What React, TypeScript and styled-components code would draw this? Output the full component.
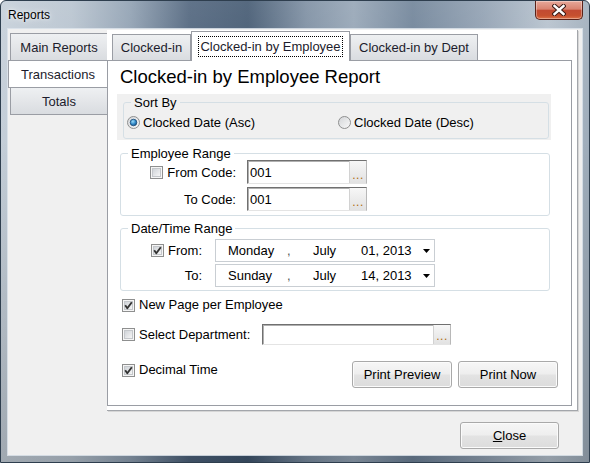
import React from 'react';
import styled, { createGlobalStyle } from 'styled-components';

const GlobalStyle = createGlobalStyle`
  html, body {
    margin: 0;
    padding: 0;
    background: #ffffff;
  }

  body {
    color: #000;
    font-family: "Liberation Sans", Arial, sans-serif;
    font-size: 13px;
  }
`;

const Window = styled.div`
  background:
    linear-gradient(180deg, rgba(255, 255, 255, 0.12) 0%, rgba(255, 255, 255, 0) 30%, rgba(0, 0, 0, 0.18) 100%),
    linear-gradient(90deg, #c4ced8 0%, #b6c2ce 12%, #8d9eb0 22%, #4c617a 32%, #3f556e 42%, #7a8ca0 52%, #93a3b4 60%, #6c8096 70%, #8e9eb0 82%, #b4c0cc 93%, #9eacba 100%);
  border: 1px solid #2e3e4e;
  border-radius: 6px 6px 0 0;
  box-sizing: border-box;
  display: flex;
  flex-direction: column;
  height: 463px;
  overflow: hidden;
  width: 590px;
`;

const TitleBar = styled.div`
  align-items: flex-start;
  display: flex;
  flex: none;
  height: 28px;
  padding-left: 7px;
`;

const Caption = styled.span`
  font-size: 12px;
  line-height: 14px;
  margin-top: 7px;
  text-shadow: 0 0 7px rgba(255, 255, 255, 0.9), 0 0 3px rgba(255, 255, 255, 0.7);
`;

const CloseBox = styled.div`
  align-items: center;
  background: linear-gradient(180deg, #e7a89a 0%, #d98370 45%, #c24a32 52%, #c6502f 82%, #de7449 100%);
  border: 1px solid #5a2219;
  border-radius: 0 0 5px 5px;
  border-top: none;
  box-shadow: inset 0 0 0 1px rgba(255, 255, 255, 0.35);
  box-sizing: border-box;
  display: flex;
  height: 19px;
  justify-content: center;
  margin-left: auto;
  margin-right: 6px;
  width: 48px;
`;

const Client = styled.div`
  background: #f0f0f0;
  box-shadow: 0 0 0 1px rgba(222, 229, 236, 0.85);
  display: flex;
  flex: 1;
  flex-direction: column;
  margin: 0 7px 7px;
`;

const MainArea = styled.div`
  display: flex;
  height: 381px;
  margin-top: 1px;
`;

const SideTabs = styled.div`
  box-sizing: border-box;
  display: flex;
  flex: none;
  flex-direction: column;
  padding-top: 3px;
  width: 99px;
`;

const SideTab = styled.div<{ $active?: boolean }>`
  align-items: center;
  background: ${(p) => (p.$active ? '#ffffff' : 'linear-gradient(180deg, #eef0f2 0%, #e4e6e9 50%, #d9dce0 100%)')};
  border: 1px solid #9a9da4;
  border-right: none;
  box-sizing: border-box;
  color: #1c1c2c;
  display: flex;
  height: 28px;
  justify-content: center;
  margin-left: ${(p) => (p.$active ? 0 : 2)}px;
  margin-top: -1px;
  position: relative;
  z-index: ${(p) => (p.$active ? 1 : 0)};

  &:first-child {
    margin-top: 0;
  }
`;

const OuterPage = styled.div`
  background: #ffffff;
  border-bottom: 1px solid #a3a6ab;
  border-right: 1px solid #a3a6ab;
  box-shadow: 1px 1px 0 #d6d6d6;
  display: flex;
  flex: 1;
  flex-direction: column;
  margin-right: 4px;
  min-width: 0;
  padding: 1px 5px 4px 0;
`;

const TabStrip = styled.div`
  align-items: flex-end;
  display: flex;
  flex: none;
  height: 29px;
  padding-left: 5px;
`;

const InnerTab = styled.div<{ $w: number; $active?: boolean }>`
  align-items: center;
  background: ${(p) => (p.$active ? '#ffffff' : 'linear-gradient(180deg, #eef0f2 0%, #e4e6e9 50%, #d9dce0 100%)')};
  border: 1px solid #9a9da4;
  border-bottom: none;
  box-sizing: border-box;
  color: #1c1c2c;
  display: flex;
  height: ${(p) => (p.$active ? 30 : 26)}px;
  justify-content: center;
  margin-bottom: ${(p) => (p.$active ? -1 : 0)}px;
  position: relative;
  width: ${(p) => p.$w}px;
  z-index: ${(p) => (p.$active ? 1 : 0)};
`;

const FocusText = styled.span`
  border: 1px dotted #000;
  line-height: 15px;
  padding: 2px 1px;
`;

const InnerPage = styled.div`
  background: #ffffff;
  border: 1px solid #9a9da4;
  display: flex;
  flex: 1;
  flex-direction: column;
  padding: 0 20px 0 9px;
`;

const Heading = styled.div`
  font-size: 18.5px;
  line-height: 22px;
  margin: 5px 0 0 3px;
`;

const SortBand = styled.div`
  background: #f0f0f0;
  margin-top: 6px;
  padding: 1px 1px 1px 3px;
`;

const Group = styled.fieldset<{ $mt?: number; $pt?: number; $pb?: number }>`
  border: 1px solid #d5dfe5;
  border-radius: 3px;
  margin: ${(p) => p.$mt ?? 0}px 1px 0 3px;
  min-width: 0;
  padding: ${(p) => p.$pt ?? 0}px 0 ${(p) => p.$pb ?? 0}px 0;
`;

const Legend = styled.legend`
  font-size: 13px;
  line-height: 15px;
  margin-left: 7px;
  padding: 0 3px;
`;

const RadioRow = styled.div`
  align-items: center;
  display: flex;
  height: 24px;
  padding-left: 3px;
`;

const RadioItem = styled.label<{ $w?: number }>`
  align-items: center;
  display: flex;
  gap: 3px;
  width: ${(p) => (p.$w ? `${p.$w}px` : 'auto')};
`;

const FieldRows = styled.div<{ $gap: number; $mt?: number }>`
  display: flex;
  flex-direction: column;
  gap: ${(p) => p.$gap}px;
  margin-top: ${(p) => p.$mt ?? 0}px;
`;

const FieldRow = styled.div<{ $h: number }>`
  align-items: center;
  display: flex;
  height: ${(p) => p.$h}px;
`;

const LabelCell = styled.div<{ $w: number; $gap: number }>`
  align-items: center;
  display: flex;
  flex: none;
  gap: 4px;
  justify-content: flex-end;
  margin-right: ${(p) => p.$gap}px;
  width: ${(p) => p.$w}px;
`;

const TextBox = styled.div<{ $w: number; $h: number }>`
  background: #ffffff;
  border: 1px solid;
  border-color: #707070 #b8b8b8 #e4e4e4 #707070;
  box-shadow: inset 1px 1px 0 #b0b0b0;
  box-sizing: border-box;
  display: flex;
  flex: none;
  height: ${(p) => p.$h}px;
  width: ${(p) => p.$w}px;
`;

const BoxValue = styled.span`
  align-items: center;
  display: flex;
  flex: 1;
  padding-left: 2px;
`;

const DotsButton = styled.span`
  align-items: flex-end;
  background: linear-gradient(180deg, #f7f7f7 0%, #ececec 50%, #e2e2e2 100%);
  border-left: 1px solid #d2d2d2;
  box-sizing: border-box;
  color: #b06a0c;
  display: flex;
  font-size: 12px;
  justify-content: center;
  letter-spacing: 0.5px;
  line-height: 12px;
  padding-bottom: 2px;
  width: 17px;
`;

const DatePicker = styled.div`
  align-items: center;
  background: #ffffff;
  border: 1px solid #c9ced3;
  box-sizing: border-box;
  display: flex;
  flex: none;
  height: 23px;
  padding: 0 4px 0 12px;
  width: 220px;
`;

const DatePart = styled.span<{ $w?: number; $muted?: boolean }>`
  color: ${(p) => (p.$muted ? '#555555' : '#000000')};
  flex: ${(p) => (p.$w ? 'none' : '1')};
  width: ${(p) => (p.$w ? `${p.$w}px` : 'auto')};
`;

const CheckRow = styled.div<{ $mt: number; $h: number; $align?: string }>`
  align-items: ${(p) => p.$align ?? 'center'};
  display: flex;
  height: ${(p) => p.$h}px;
  margin-top: ${(p) => p.$mt}px;
  padding-left: 5px;
`;

const CheckItem = styled.label<{ $w?: number }>`
  align-items: center;
  display: flex;
  flex: none;
  gap: 4px;
  line-height: 18px;
  width: ${(p) => (p.$w ? `${p.$w}px` : 'auto')};
`;

const ButtonGroup = styled.div`
  display: flex;
  gap: 6px;
  margin-left: auto;
  margin-right: -7px;
`;

const PushButton = styled.button<{ $w: number }>`
  background: linear-gradient(180deg, #f6f6f6 0%, #eeeeee 48%, #e3e3e3 52%, #dcdcdc 100%);
  border: 1px solid #a9a9a9;
  border-radius: 3px;
  box-shadow: inset 0 0 0 1px #fbfbfb;
  color: #000;
  font-family: "Liberation Sans", Arial, sans-serif;
  font-size: 13px;
  height: 27px;
  padding: 0;
  width: ${(p) => p.$w}px;
`;

const Footer = styled.div`
  display: flex;
  justify-content: flex-end;
  padding: 11px 23px 0 0;
`;

const Glyph = styled.svg`
  display: block;
  flex: none;
`;

const Check = ({ checked }: { checked?: boolean }) => (
  <Glyph width="13" height="13" viewBox="0 0 13 13">
    <defs>
      <linearGradient id="cbFill" x1="0" y1="0" x2="1" y2="1">
        <stop offset="0" stopColor="#cdd1d6" />
        <stop offset="1" stopColor="#f8f8f8" />
      </linearGradient>
    </defs>
    <rect x="0.5" y="0.5" width="12" height="12" fill="#f5f5f5" stroke="#8e8f8f" />
    <rect x="2.5" y="2.5" width="8" height="8" fill="url(#cbFill)" stroke="#c4c7cb" />
    {checked && (
      <path d="M3.2 6.3 L5.3 9.2 L9.8 3.2" fill="none" stroke="#333" strokeWidth="1.9" strokeLinejoin="round" />
    )}
  </Glyph>
);

const Radio = ({ checked }: { checked?: boolean }) => (
  <Glyph width="13" height="13" viewBox="0 0 13 13">
    <defs>
      <linearGradient id="rbFill" x1="0" y1="0" x2="1" y2="1">
        <stop offset="0" stopColor="#d2d4d7" />
        <stop offset="1" stopColor="#fafafa" />
      </linearGradient>
      <radialGradient id="rbDot" cx="0.4" cy="0.35" r="0.7">
        <stop offset="0" stopColor="#9bdaf8" />
        <stop offset="0.6" stopColor="#2d86c6" />
        <stop offset="1" stopColor="#1a4f80" />
      </radialGradient>
    </defs>
    <circle cx="6.5" cy="6.5" r="6" fill="url(#rbFill)" stroke="#8e8f8f" />
    {checked && <circle cx="6.5" cy="6.5" r="3.3" fill="url(#rbDot)" stroke="#1c4c78" strokeWidth="0.8" />}
  </Glyph>
);

const DropArrow = () => (
  <Glyph width="7" height="4" viewBox="0 0 7 4">
    <path d="M0 0 H7 L3.5 4 Z" fill="#000" />
  </Glyph>
);

const CloseGlyph = () => (
  <Glyph width="14" height="12" viewBox="0 0 14 12">
    <path d="M2.5 2 L11.5 10 M11.5 2 L2.5 10" stroke="#3b1a15" strokeWidth="4.4" strokeLinecap="square" />
    <path d="M2.5 2 L11.5 10 M11.5 2 L2.5 10" stroke="#ffffff" strokeWidth="2.4" strokeLinecap="square" />
  </Glyph>
);

const LookupBox = ({ w, h, value }: { w: number; h: number; value?: string }) => (
  <TextBox $w={w} $h={h}>
    <BoxValue>{value}</BoxValue>
    <DotsButton>...</DotsButton>
  </TextBox>
);

const DateField = ({ day, month, date }: { day: string; month: string; date: string }) => (
  <DatePicker>
    <DatePart $w={59}>{day}</DatePart>
    <DatePart $w={26} $muted>,</DatePart>
    <DatePart $w={48}>{month}</DatePart>
    <DatePart>{date}</DatePart>
    <DropArrow />
  </DatePicker>
);

const sideTabs = ['Main Reports', 'Transactions', 'Totals'];

const App = () => (
  <>
    <GlobalStyle />
    <Window>
      <TitleBar>
        <Caption>Reports</Caption>
        <CloseBox>
          <CloseGlyph />
        </CloseBox>
      </TitleBar>
      <Client>
        <MainArea>
          <SideTabs>
            {sideTabs.map((t) => (
              <SideTab key={t} $active={t === 'Transactions'}>
                {t}
              </SideTab>
            ))}
          </SideTabs>
          <OuterPage>
            <TabStrip>
              <InnerTab $w={79}>Clocked-in</InnerTab>
              <InnerTab $w={159} $active>
                <FocusText>Clocked-in by Employee</FocusText>
              </InnerTab>
              <InnerTab $w={128}>Clocked-in by Dept</InnerTab>
            </TabStrip>
            <InnerPage>
              <Heading>Clocked-in by Employee Report</Heading>

              <SortBand>
                <Group $pb={4}>
                  <Legend>Sort By</Legend>
                  <RadioRow>
                    <RadioItem $w={211}>
                      <Radio checked />
                      Clocked Date (Asc)
                    </RadioItem>
                    <RadioItem>
                      <Radio />
                      Clocked Date (Desc)
                    </RadioItem>
                  </RadioRow>
                </Group>
              </SortBand>

              <Group $mt={6} $pb={4}>
                <Legend>Employee Range</Legend>
                <FieldRows $gap={3} $mt={-1}>
                  <FieldRow $h={24}>
                    <LabelCell $w={115} $gap={11}>
                      <Check />
                      From Code:
                    </LabelCell>
                    <LookupBox w={120} h={24} value="001" />
                  </FieldRow>
                  <FieldRow $h={24}>
                    <LabelCell $w={115} $gap={11}>
                      To Code:
                    </LabelCell>
                    <LookupBox w={120} h={24} value="001" />
                  </FieldRow>
                </FieldRows>
              </Group>

              <Group $mt={5} $pt={3} $pb={3}>
                <Legend>Date/Time Range</Legend>
                <FieldRows $gap={2}>
                  <FieldRow $h={23}>
                    <LabelCell $w={81} $gap={13}>
                      <Check checked />
                      From:
                    </LabelCell>
                    <DateField day="Monday" month="July" date="01, 2013" />
                  </FieldRow>
                  <FieldRow $h={23}>
                    <LabelCell $w={81} $gap={13}>
                      To:
                    </LabelCell>
                    <DateField day="Sunday" month="July" date="14, 2013" />
                  </FieldRow>
                </FieldRows>
              </Group>

              <CheckRow $mt={4} $h={20}>
                <CheckItem>
                  <Check checked />
                  New Page per Employee
                </CheckItem>
              </CheckRow>

              <CheckRow $mt={9} $h={21}>
                <CheckItem $w={140}>
                  <Check />
                  Select Department:
                </CheckItem>
                <LookupBox w={189} h={21} />
              </CheckRow>

              <CheckRow $mt={16} $h={27} $align="flex-start">
                <CheckItem>
                  <Check checked />
                  Decimal Time
                </CheckItem>
                <ButtonGroup>
                  <PushButton $w={100}>Print Preview</PushButton>
                  <PushButton $w={100}>Print Now</PushButton>
                </ButtonGroup>
              </CheckRow>
            </InnerPage>
          </OuterPage>
        </MainArea>
        <Footer>
          <PushButton $w={99}>
            <u>C</u>lose
          </PushButton>
        </Footer>
      </Client>
    </Window>
  </>
);

export default App;
